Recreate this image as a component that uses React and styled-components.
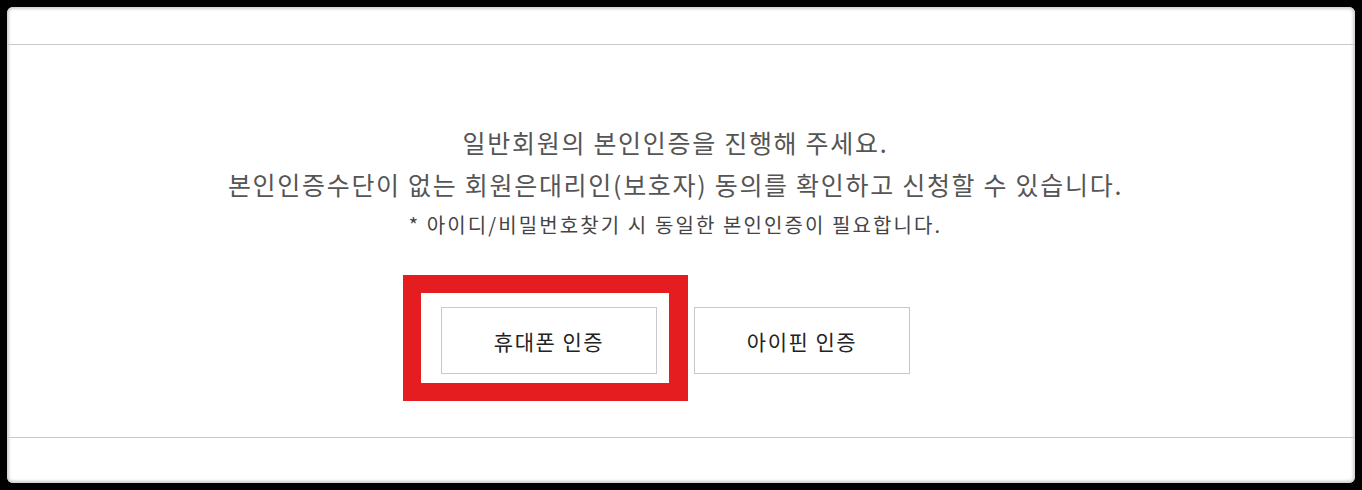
import React from "react";
import styled, { createGlobalStyle } from "styled-components";

const Global = createGlobalStyle`
  html, body { margin: 0; padding: 0; background: #000; }
  body { font-family: "Noto Sans CJK KR", "Noto Sans", sans-serif; }
  * { box-sizing: border-box; }
`;

const Page = styled.div`
  width: 1362px;
  height: 490px;
  padding: 7px;
  background: #000;
`;

const Card = styled.div`
  width: 1348px;
  height: 476px;
  background: #fff;
  border-radius: 6px;
  box-shadow: inset 0 0 3px 2px rgba(200, 200, 200, 0.9);
  display: flex;
  flex-direction: column;
`;

const Band = styled.div`
  height: ${(p) => p.$h}px;
  flex: none;
  ${(p) => (p.$bottom ? "border-top: 1px solid #c8c8c8;" : "border-bottom: 1px solid #c8c8c8;")}
`;

const Body = styled.div`
  flex: 1;
  display: flex;
  flex-direction: column;
  align-items: center;
  padding-top: 76px;
  padding-right: 11px;
`;

const Lead = styled.p`
  margin: 0;
  font-size: 25px;
  line-height: 42px;
  color: #555;
  text-align: center;
  letter-spacing: 1.7px;
`;

const Note = styled.p`
  margin: 0;
  font-size: 20px;
  line-height: 40px;
  color: #444;
  text-align: center;
  letter-spacing: 2.1px;
`;

const Buttons = styled.div`
  display: flex;
  gap: 37px;
  margin-top: 62px;
`;

const Slot = styled.div`
  position: relative;
`;

const Button = styled.button`
  width: 216px;
  height: 67px;
  background: #fff;
  border: 1px solid #c8c8c8;
  font-family: inherit;
  font-size: 21px;
  letter-spacing: 1.5px;
  color: #222;
  cursor: pointer;
  padding: 0;
`;

const Highlight = styled.span`
  position: absolute;
  left: -38px;
  top: -32px;
  width: 285px;
  height: 126px;
  border: 18px solid #e51c20;
  border-right-width: 19px;
  pointer-events: none;
`;

export default function App() {
  return (
    <>
      <Global />
      <Page>
        <Card>
          <Band $h={38} />
          <Body>
            <Lead>일반회원의 본인인증을 진행해 주세요.</Lead>
            <Lead>본인인증수단이 없는 회원은대리인(보호자) 동의를 확인하고 신청할 수 있습니다.</Lead>
            <Note>* 아이디/비밀번호찾기 시 동일한 본인인증이 필요합니다.</Note>
            <Buttons>
              <Slot>
                <Button>휴대폰 인증</Button>
                <Highlight />
              </Slot>
              <Slot>
                <Button>아이핀 인증</Button>
              </Slot>
            </Buttons>
          </Body>
          <Band $h={46} $bottom />
        </Card>
      </Page>
    </>
  );
}
